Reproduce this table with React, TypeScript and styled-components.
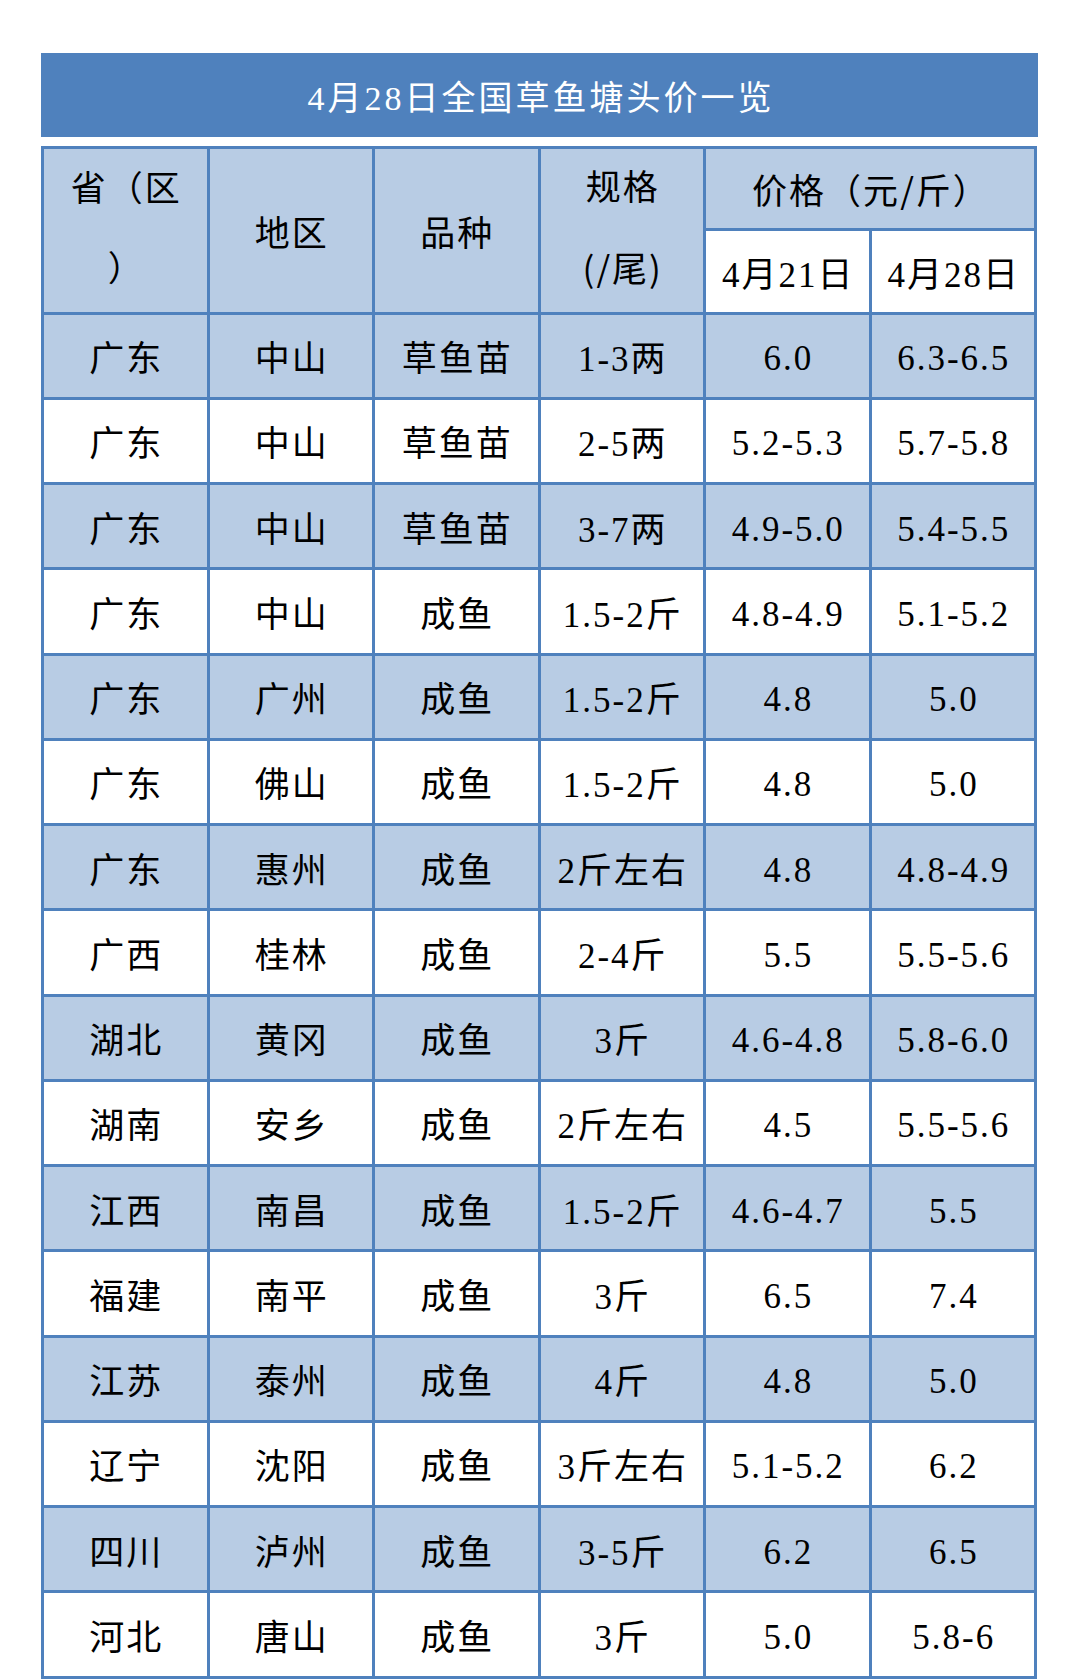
import * as React from "react";
import styled, { createGlobalStyle } from "styled-components";

const GlobalStyle = createGlobalStyle`
    html, body {
        margin: 0;
        padding: 0;
        background: #ffffff;
    }
    body {
        font-family: "Liberation Serif", "Noto Sans CJK SC", serif;
    }
`;

const BLUE = "#4f81bd";
const LIGHT = "#b8cce4";

type Tone = "blue" | "white";

const rows: string[][] = [
    ["广东", "中山", "草鱼苗", "1-3两", "6.0", "6.3-6.5"],
    ["广东", "中山", "草鱼苗", "2-5两", "5.2-5.3", "5.7-5.8"],
    ["广东", "中山", "草鱼苗", "3-7两", "4.9-5.0", "5.4-5.5"],
    ["广东", "中山", "成鱼", "1.5-2斤", "4.8-4.9", "5.1-5.2"],
    ["广东", "广州", "成鱼", "1.5-2斤", "4.8", "5.0"],
    ["广东", "佛山", "成鱼", "1.5-2斤", "4.8", "5.0"],
    ["广东", "惠州", "成鱼", "2斤左右", "4.8", "4.8-4.9"],
    ["广西", "桂林", "成鱼", "2-4斤", "5.5", "5.5-5.6"],
    ["湖北", "黄冈", "成鱼", "3斤", "4.6-4.8", "5.8-6.0"],
    ["湖南", "安乡", "成鱼", "2斤左右", "4.5", "5.5-5.6"],
    ["江西", "南昌", "成鱼", "1.5-2斤", "4.6-4.7", "5.5"],
    ["福建", "南平", "成鱼", "3斤", "6.5", "7.4"],
    ["江苏", "泰州", "成鱼", "4斤", "4.8", "5.0"],
    ["辽宁", "沈阳", "成鱼", "3斤左右", "5.1-5.2", "6.2"],
    ["四川", "泸州", "成鱼", "3-5斤", "6.2", "6.5"],
    ["河北", "唐山", "成鱼", "3斤", "5.0", "5.8-6"],
];

const Page = styled.div`
    width: 1079px;
    box-sizing: border-box;
    padding: 53px 0 0 41px;
`;

const TitleBar = styled.div`
    width: 997px;
    height: 84px;
    display: flex;
    align-items: center;
    justify-content: center;
    background: ${BLUE};
    color: #ffffff;
    font-size: 34px;
    letter-spacing: 3px;
    padding-left: 3px;
    box-sizing: border-box;
`;

const PriceGrid = styled.div`
    margin-top: 9px;
    width: 996px;
    box-sizing: border-box;
    display: grid;
    grid-template-columns: repeat(6, 1fr);
    grid-template-rows: 79px 80.5px repeat(16, 82.25px);
    gap: 3px;
    padding: 3px;
    background: ${BLUE};
`;

// numeric cells sit a little below the middle in the original sheet
const Cell = styled.div<{ $tone: Tone; $numeric?: boolean }>`
    display: flex;
    align-items: center;
    justify-content: center;
    background: ${(p) => (p.$tone === "blue" ? LIGHT : "#ffffff")};
    color: #000000;
    font-size: 35px;
    letter-spacing: 2px;
    padding-left: 2px;
    padding-top: ${(p) => (p.$numeric ? "7px" : "0")};
    white-space: nowrap;
`;

const HeadCell = styled(Cell)<{ $col: string; $row: string }>`
    grid-column: ${(p) => p.$col};
    grid-row: ${(p) => p.$row};
    text-align: center;
`;

const Stacked = styled.div<{ $line: number }>`
    line-height: ${(p) => p.$line}px;
    text-align: center;
`;

const SansPart = styled.span`
    font-family: "Noto Sans CJK SC", sans-serif;
`;

export default function App() {
    return (
        <>
            <GlobalStyle />
            <Page>
                <TitleBar>4月28日全国草鱼塘头价一览</TitleBar>
                <PriceGrid>
                    <HeadCell $tone="blue" $col="1" $row="1 / span 2">
                        <Stacked $line={80}>
                            省（区
                            <br />）
                        </Stacked>
                    </HeadCell>
                    <HeadCell $tone="blue" $col="2" $row="1 / span 2">
                        地区
                    </HeadCell>
                    <HeadCell $tone="blue" $col="3" $row="1 / span 2">
                        品种
                    </HeadCell>
                    <HeadCell $tone="blue" $col="4" $row="1 / span 2">
                        <Stacked $line={78}>
                            规格
                            <br />
                            <SansPart>(/尾)</SansPart>
                        </Stacked>
                    </HeadCell>
                    <HeadCell $tone="blue" $col="5 / span 2" $row="1">
                        价格（元<SansPart>/</SansPart>斤）
                    </HeadCell>
                    <HeadCell $tone="white" $col="5" $row="2">
                        4月21日
                    </HeadCell>
                    <HeadCell $tone="white" $col="6" $row="2">
                        4月28日
                    </HeadCell>
                    {rows.map((row, i) =>
                        row.map((value, j) => (
                            <Cell key={`${i}-${j}`} $tone={i % 2 === 0 ? "blue" : "white"} $numeric={j >= 4}>
                                {value}
                            </Cell>
                        ))
                    )}
                </PriceGrid>
            </Page>
        </>
    );
}
